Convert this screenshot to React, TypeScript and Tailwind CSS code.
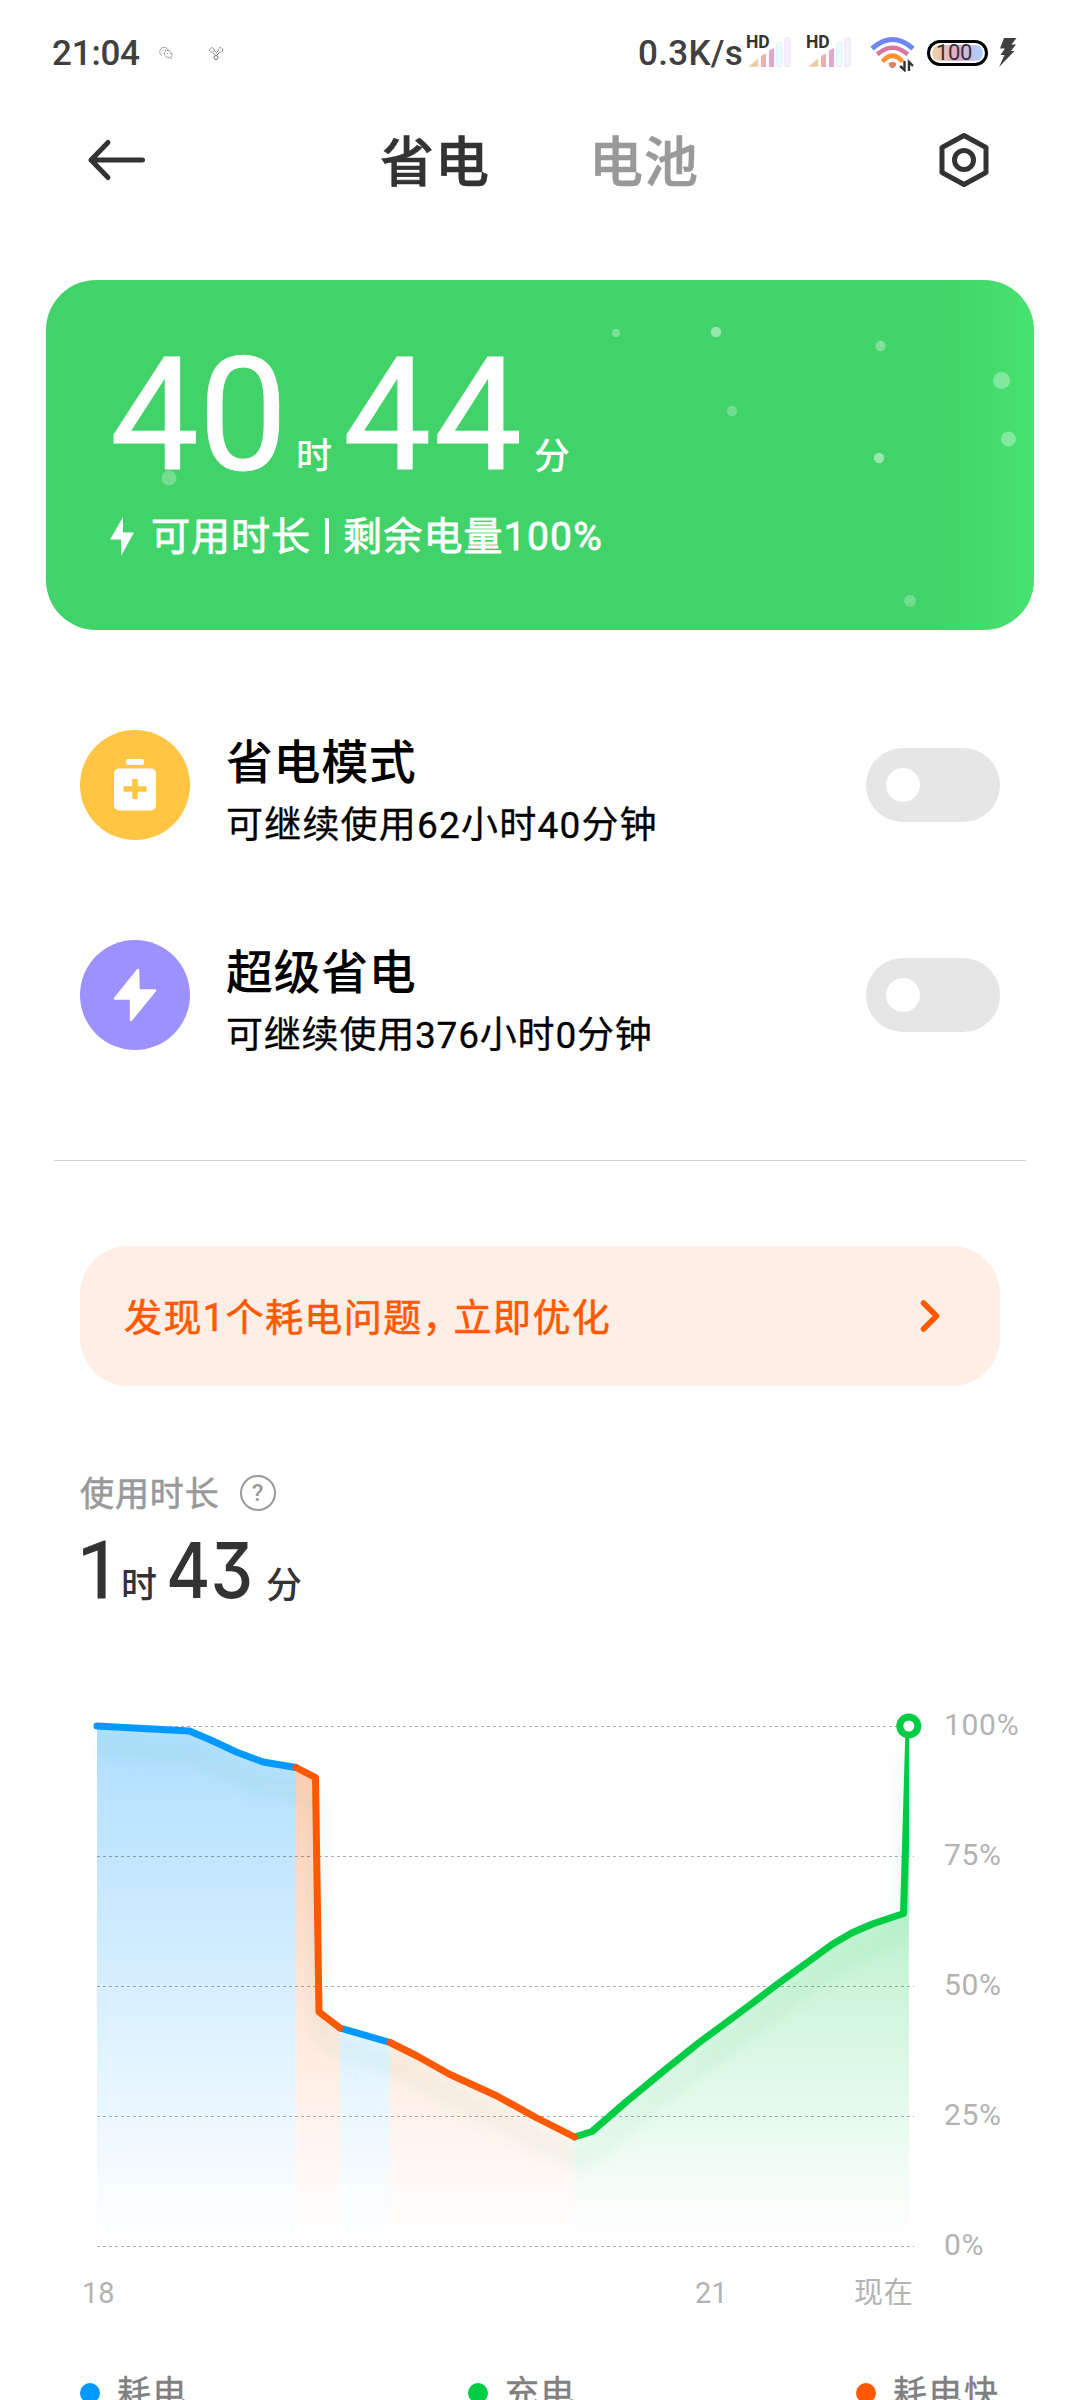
import React from "react";

const BLUE = "#0099ff";
const GREEN = "#00cc44";
const ORANGE = "#ff5900";

function Signal() {
  return (
    <div className="relative h-[32px] w-[44px]">
      <svg className="block" width="44" height="32" viewBox="0 0 44 32">
        <path d="M1 30.5 L10 23 V30.5 Z" fill="#eccb9c" stroke="#f0d8b8" />
        <path d="M13 20 L18 17.500 V31 H13 Z" fill="#e9b0b0" />
        <path d="M21 14.500 L26 12 V31 H21 Z" fill="#e0a6cd" />
        <rect x="28.800" y="6.500" width="5" height="24" rx="2" fill="#e9fdff" stroke="#e3eefc" strokeWidth="1.200" />
        <rect x="37" y="1.500" width="5" height="29" rx="2" fill="#f8f2ff" stroke="#ece4fb" strokeWidth="1.200" />
      </svg>
      <span className="absolute -top-[2px] -left-[2px] font-['Roboto'] text-[17.5px] leading-[16px] font-bold text-[#333]">HD</span>
    </div>
  );
}

function StatusBar() {
  return (
    <div className="flex h-[106px] items-start pt-[36px] text-[#404040]">
      <span className="ml-[52px] w-[107px] font-['Roboto'] text-[35px] leading-[36px] font-medium tracking-[-0.2px]">21:04</span>
      <svg className="mt-[10px]" width="14" height="14" viewBox="0 0 14 14" fill="none" stroke="#666" strokeWidth="0.8">
        <path d="M3 9.500 C0 8 0 3 3.500 1.600 C6.500 0.800 9 2.500 9 4.500" strokeDasharray="2 0.600" />
        <path d="M5.500 8.500 C4.500 5.500 8 3.800 10.500 5 C13.500 6.500 13.500 9.500 11.800 11 L12 12.400 L10 11.400 C8 11.800 6.200 10.500 5.500 8.500Z" strokeDasharray="2 0.600" />
        <path d="M3.500 4 H4.500 M6 4 H7 M8 7.500 H9 M10.500 7.500 H11.500" />
      </svg>
      <svg className="mt-[10px] ml-[36px]" width="15" height="15" viewBox="0 0 15 15" fill="none" stroke="#777" strokeWidth="1">
        <circle cx="3" cy="4" r="2.300" strokeDasharray="2 0.700" />
        <circle cx="11.500" cy="4" r="2.300" strokeDasharray="2 0.700" />
        <circle cx="7" cy="11.500" r="2" />
        <path d="M4 7 L6.500 9 M10 7 L8 9 M6 5 L7.500 6.500 L9 5" />
      </svg>
      <span className="ml-[414px] w-[110px] font-['Roboto'] text-[35px] leading-[36px] font-medium tracking-[0.3px]">0.3K/s</span>
      <Signal />
      <div className="ml-[16px]">
        <Signal />
      </div>
      <svg className="ml-[18px]" width="46" height="36" viewBox="0 0 46 36" fill="none">
        <path d="M4 11 Q22.500 -4 41 11" stroke="#6f86f2" strokeWidth="5" strokeLinecap="square" />
        <path d="M9 17 Q22.500 6.500 36 17" stroke="#d977a4" strokeWidth="4.500" strokeLinecap="square" />
        <path d="M14 24 Q22.500 15.500 31 24" stroke="#ff9234" strokeWidth="4.500" strokeLinecap="square" />
        <path d="M19 27.500 Q22.500 25 26 27.500 L25 30.500 L22.500 32 L20 30.500 Z" fill="#d98468" stroke="#d98468" strokeLinejoin="round" />
        <path d="M34.500 25 V34 L30 30 M39 35 V26 L43 30" stroke="#333" strokeWidth="2.400" />
      </svg>
      <div className="mt-[4px] ml-[11px] flex h-[26px] w-[61px] items-center justify-center rounded-full border-[3px] border-black bg-white p-[2px]">
        <div className="flex h-full w-full items-center rounded-full bg-linear-to-r from-[#f0d2a2] via-[#e0a8d0] to-[#a9d2ff] pl-[4px]">
          <span className="font-['Roboto'] text-[22px] leading-[20px] tracking-[-0.4px] text-[#333]">100</span>
        </div>
      </div>
      <svg className="mt-[2px] ml-[11px]" width="18" height="29" viewBox="0 0 18 29" fill="#404040">
        <path d="M5 0 H17.500 L12.500 6.500 H17 L12 13 H15.500 L0 29 L5.500 17 H1.500 L6 10.500 H1 Z" />
      </svg>
    </div>
  );
}

function Header() {
  return (
    <div className="flex h-[108px] items-center pl-[87px]">
      <svg width="60" height="44" viewBox="0 0 60 44" fill="none" stroke="#333" strokeWidth="5" strokeLinecap="round" strokeLinejoin="round">
        <path d="M21 4.500 L4 22 L21 39.500 M4 22 H55.500" />
      </svg>
      <span className="ml-[233px] w-[209px] pt-[7px] text-[54px] leading-[60px] font-medium tracking-[1px] text-[#333] [-webkit-text-stroke:0.600px_#333]">省电</span>
      <span className="w-[349px] pt-[7px] text-[54px] leading-[60px] font-medium tracking-[1px] text-[#999] [-webkit-text-stroke:0.600px_#999]">电池</span>
      <svg width="52" height="56" viewBox="0 0 52 56" fill="none" stroke="#333" strokeWidth="5">
        <path d="M26 3.500 L48 15.500 V40.500 L26 52.500 L4 40.500 V15.500 Z" strokeLinejoin="round" />
        <circle cx="26" cy="28" r="9.500" />
      </svg>
    </div>
  );
}

const DOTS = [
  { x: 616, y: 333, r: 4, o: 0.3 },
  { x: 716, y: 332, r: 5.2, o: 0.45 },
  { x: 880.5, y: 346, r: 5.2, o: 0.33 },
  { x: 1001.5, y: 380.5, r: 8.5, o: 0.33 },
  { x: 732, y: 411, r: 5.2, o: 0.25 },
  { x: 1008.5, y: 439, r: 7.5, o: 0.33 },
  { x: 879, y: 458, r: 5.2, o: 0.45 },
  { x: 910, y: 601, r: 6, o: 0.25 },
  { x: 169, y: 478, r: 7.5, o: 0.27 },
];

function Card() {
  return (
    <div className="relative mx-[46px] mt-[66px] h-[350px] overflow-hidden rounded-[50px] bg-linear-to-r from-[#41d369] from-90% to-[#47e270] pl-[64px] text-white">
      <svg className="absolute inset-0" width="988" height="350" viewBox="46 280 988 350">
        {DOTS.map((d) => (
          <circle key={d.x} cx={d.x} cy={d.y} r={d.r} fill="#fff" fillOpacity={d.o} />
        ))}
      </svg>
      <div className="relative flex h-[216px] items-baseline pt-[45px] leading-[180px]">
        <span className="w-[186px] font-['Roboto'] text-[158px] tracking-[0px] [-webkit-text-stroke:1px_white]">40</span>
        <span className="w-[47px] text-[36px] font-medium">时</span>
        <span className="w-[191px] font-['Roboto'] text-[157px] tracking-[2.400px] [-webkit-text-stroke:1px_white]">44</span>
        <span className="text-[36px] font-medium">分</span>
      </div>
      <div className="relative flex h-[80px] items-center">
        <svg width="24" height="39" viewBox="0 0 24 39" fill="#fff">
          <path d="M13 0 L0 22.500 H11 V39 L24 15.500 H13 Z" />
        </svg>
        <span className="ml-[17px] pt-[2px] text-[39px] tracking-[1px] [-webkit-text-stroke:0.800px_white]">可用时长</span>
        <span className="mr-[14px] ml-[14px] h-[36px] w-[4px] bg-white" />
        <span className="pt-[2px] text-[39px] tracking-[1.200px] [-webkit-text-stroke:0.800px_white]">剩余电量100%</span>
      </div>
    </div>
  );
}

function Toggle() {
  return (
    <div className="flex h-[74px] w-[134px] items-center rounded-full bg-[#e6e6e6] pl-[20px]">
      <div className="h-[34px] w-[34px] rounded-full bg-white" />
    </div>
  );
}

function ModeRow({ bg, icon, title, sub, subClass }: { bg: string; icon: React.ReactNode; title: string; sub: string; subClass: string }) {
  return (
    <div className="flex h-[110px] items-center pr-[80px] pl-[80px]">
      <div className={"flex h-[110px] w-[110px] items-center justify-center rounded-full " + bg}>{icon}</div>
      <div className="ml-[36px] flex flex-1 flex-col pt-[16px] text-black">
        <span className="h-[63px] text-[47px] leading-[62px] font-medium tracking-[0.6px]">{title}</span>
        <span className={"h-[59px] text-[37px] leading-[62px] [-webkit-text-stroke:0.300px_black] " + subClass}>{sub}</span>
      </div>
      <Toggle />
    </div>
  );
}

function Banner() {
  return (
    <div className="mx-[80px] mt-[85px] flex h-[140px] items-center justify-between rounded-[48px] bg-[#ffeee6] pr-[58px] pl-[44px] text-[#ff5900]">
      <span className="pt-[4px] text-[38px] tracking-[1.400px] [-webkit-text-stroke:0.600px_#ff5900]">
        发现1个耗电问题<span className="tracking-[-7px]">，</span>立即优化
      </span>
      <svg width="26" height="34" viewBox="0 0 26 34" fill="none" stroke="#ff5900" strokeWidth="5.500" strokeLinecap="round" strokeLinejoin="round">
        <path d="M7.500 4 L20.500 17 L7.500 30" />
      </svg>
    </div>
  );
}

function Usage() {
  return (
    <div className="h-[308px] pt-[80px] pl-[80px]">
      <div className="flex h-[54px] items-center">
        <span className="pt-[3px] text-[34px] tracking-[0.9px] text-[#999] [-webkit-text-stroke:0.600px_#999]">使用时长</span>
        <div className="ml-[20px] flex h-[36px] w-[36px] items-center justify-center rounded-full border-[2.500px] border-[#999] font-['Roboto'] text-[24px] leading-none font-medium text-[#999]">?</div>
      </div>
      <div className="flex h-[90px] items-baseline pt-[5px] leading-[90px] text-[#333]">
        <span className="-ml-[3px] w-[44px] font-['Roboto'] text-[79px] [-webkit-text-stroke:0.800px_#333]">1</span>
        <span className="w-[45px] text-[36px] font-medium">时</span>
        <span className="inline-block w-[100px] origin-left scale-x-[0.88] font-['Inter'] text-[77px] font-medium [font-feature-settings:'cv09']">43</span>
        <span className="text-[36px] font-medium">分</span>
      </div>
    </div>
  );
}

type Pt = [number, number];
const SEGMENTS: { color: string; grad: string; pts: Pt[] }[] = [
  { color: BLUE, grad: "url(#gb)", pts: [[97, 1726], [189.5, 1731], [213, 1741], [235.6, 1751.7], [263, 1762], [296, 1767.5]] },
  { color: BLUE, grad: "url(#gb)", pts: [[340, 2028], [390, 2042.5]] },
  { color: GREEN, grad: "url(#gg)", pts: [[574.5, 2137], [592, 2131.5], [626, 2102], [660.5, 2073.5], [698.5, 2043], [746.6, 2007.5], [781, 1981.5], [832.7, 1944], [851.6, 1933], [872.3, 1924], [903.5, 1913.5], [909, 1727]] },
  { color: ORANGE, grad: "url(#go)", pts: [[296, 1767.5], [315.5, 1777.5], [319, 2012], [340, 2028]] },
  { color: ORANGE, grad: "url(#go)", pts: [[390, 2042.5], [418, 2056.5], [449, 2074], [497, 2096], [535, 2117], [574.5, 2137]] },
];
const ORDERED = [SEGMENTS[0], SEGMENTS[3], SEGMENTS[1], SEGMENTS[4], SEGMENTS[2]];
const line = (p: Pt[]) => p.map((q) => q.join(",")).join(" ");
const area = (p: Pt[]) => `${p[0][0]},2246 ${line(p)} ${p[p.length - 1][0]},2246`;

function Fade({ id, color }: { id: string; color: string }) {
  return (
    <linearGradient id={id} gradientUnits="userSpaceOnUse" x1="0" x2="0" y1="1726" y2="2240">
      <stop offset="0" stopColor={color} stopOpacity="0.32" />
      <stop offset="1" stopColor={color} stopOpacity="0" />
    </linearGradient>
  );
}

function Chart() {
  return (
    <div className="flex h-[576px] pl-[80px]">
      <svg className="block shrink-0" width="850" height="576" viewBox="80 1694 850 576">
        <defs>
          <Fade id="gb" color={BLUE} />
          <Fade id="go" color={ORANGE} />
          <linearGradient id="gg" gradientUnits="userSpaceOnUse" x1="0" x2="0" y1="1726" y2="2240">
            <stop offset="0" stopColor={GREEN} stopOpacity="0.4" />
            <stop offset="1" stopColor={GREEN} stopOpacity="0" />
          </linearGradient>
          <clipPath id="right"><rect x="80" y="1700" width="829" height="560" /></clipPath>
          <filter id="soft" filterUnits="userSpaceOnUse" x="60" y="1690" width="880" height="570"><feGaussianBlur stdDeviation="8" /></filter>
        </defs>
        {SEGMENTS.map((s) => <polygon key={s.pts[0][0]} points={area(s.pts)} fill={s.grad} />)}
        {[1726.5, 1856.5, 1986.5, 2116.5, 2246.5].map((y) => (
          <line key={y} x1="97" x2="914" y1={y} y2={y} stroke="#000" strokeOpacity="0.32" strokeWidth="1" strokeDasharray="3 3" />
        ))}
        <g clipPath="url(#right)">
          <polyline points={ORDERED.map((s) => line(s.pts)).join(" ")} transform="translate(0 22)" fill="none" stroke="#2fa55a" strokeOpacity="0.09" strokeWidth="12" filter="url(#soft)" />
          {SEGMENTS.map((s) => (
            <polyline key={s.pts[0][0]} points={line(s.pts)} fill="none" stroke={s.color} strokeWidth="7" strokeLinecap="round" strokeLinejoin="round" />
          ))}
        </g>
        <circle cx="908.800" cy="1726" r="9" fill="#fff" stroke={GREEN} strokeWidth="7" />
      </svg>
      <div className="ml-[14px] flex flex-col pt-[11px] font-['Roboto'] text-[30px] tracking-[0.7px] text-[#b3b3b3]">
        {["100%", "75%", "50%", "25%", "0%"].map((t) => (
          <span key={t} className="h-[130px] shrink-0 leading-[40px]">{t}</span>
        ))}
      </div>
    </div>
  );
}

function Legend({ color, label, width }: { color: string; label: string; width: string }) {
  return (
    <div className={"flex items-center " + width}>
      <span className={"h-[20px] w-[20px] rounded-full " + color} />
      <span className="ml-[17px] text-[34px] leading-[44px] tracking-[1.500px] text-[#808080] [-webkit-text-stroke:0.400px_#808080]">{label}</span>
    </div>
  );
}

export default function App() {
  return (
    <div className="h-[2400px] w-[1080px] overflow-hidden bg-white font-['Roboto','Noto_Sans_CJK_SC',sans-serif] whitespace-nowrap">
      <StatusBar />
      <Header />
      <Card />
      <div className="mt-[100px] flex flex-col gap-[100px]">
        <ModeRow
          bg="bg-[#ffc543]"
          title="省电模式"
          sub="可继续使用62小时40分钟"
          subClass="tracking-[1.200px]"
          icon={
            <svg width="42" height="52" viewBox="0 0 42 52">
              <rect x="12" y="0" width="18" height="6" rx="2" fill="#fff" />
              <rect x="0" y="9.500" width="42" height="42" rx="5" fill="#fff" />
              <path d="M21 20 V40 M9.500 30 H32.500" stroke="#ffc543" strokeWidth="5.500" />
            </svg>
          }
        />
        <ModeRow
          bg="bg-[#9c91ff]"
          title="超级省电"
          sub="可继续使用376小时0分钟"
          subClass="tracking-[0.800px]"
          icon={
            <svg width="44" height="54" viewBox="0 0 44 54">
              <path d="M25 2 L2 30.500 H18 V52 L42 22.500 H25.500 Z" fill="#fff" stroke="#fff" strokeWidth="2.500" strokeLinejoin="round" />
            </svg>
          }
        />
      </div>
      <div className="mx-[54px] mt-[110px] h-px bg-[#d0d0d0]" />
      <Banner />
      <Usage />
      <Chart />
      <div className="flex h-[50px] items-center pb-[2px] pl-[82px] text-[29px] text-[#b3b3b3]">
        <span className="w-[613px] font-['Roboto']">18</span>
        <span className="w-[159px] font-['Roboto']">21</span>
        <span className="tracking-[0.8px]">现在</span>
      </div>
      <div className="mt-[51px] flex h-[44px] pl-[80px]">
        <Legend color="bg-[#0099ff]" label="耗电" width="w-[388px]" />
        <Legend color="bg-[#00cc44]" label="充电" width="w-[388px]" />
        <Legend color="bg-[#ff5900]" label="耗电快" width="w-[180px]" />
      </div>
    </div>
  );
}
